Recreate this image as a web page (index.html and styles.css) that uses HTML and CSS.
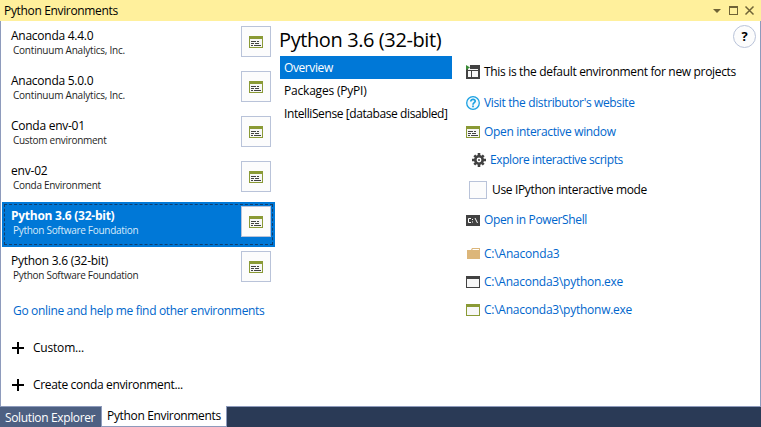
FILE: index.html
```html
<!DOCTYPE html>
<html lang="en">
<head>
<meta charset="utf-8">
<title>Python Environments</title>
<link rel="stylesheet" href="styles.css">
</head>
<body>
<svg width="0" height="0" class="defs">
  <symbol id="interactive" viewBox="0 0 14 12"><path fill="#8a9a35" d="M0 0h14v12H0z"/><path fill="#f7f7f7" d="M1 3h12v8H1z"/><path stroke="#424242" d="M2 5.500h5M8 5.500h2M2 7.500h3M6 7.500h4M2 9.500h2M5 9.500h7"/></symbol>
</svg>
<header class="titlebar"><span class="t-title">Python Environments</span>
  <svg class="winbtns" width="42" height="12" viewBox="0 0 42 12"><path fill="#6f6336" d="M0 4h8L4 8zM16 1h9v9h-9z"/><path fill="#fff09c" d="M17 3h7v6h-7z"/><path stroke="#6f6336" stroke-width="1.500" d="M32.500 1.500l8 8M40.500 1.500l-8 8"/></svg>
</header>
<main class="body">
  <section class="list">
    <div class="env"><div><div class="name n1">Anaconda 4.4.0</div><div class="sub s1">Continuum Analytics, Inc.</div></div><span class="btn"><svg width="14" height="12"><use href="#interactive"/></svg></span></div>
    <div class="env"><div><div class="name n1">Anaconda 5.0.0</div><div class="sub s1">Continuum Analytics, Inc.</div></div><span class="btn"><svg width="14" height="12"><use href="#interactive"/></svg></span></div>
    <div class="env"><div><div class="name n2">Conda env-01</div><div class="sub s2">Custom environment</div></div><span class="btn"><svg width="14" height="12"><use href="#interactive"/></svg></span></div>
    <div class="env"><div><div class="name n3">env-02</div><div class="sub s3">Conda Environment</div></div><span class="btn"><svg width="14" height="12"><use href="#interactive"/></svg></span></div>
    <div class="env selected"><div><div class="name n4">Python 3.6 (32-bit)</div><div class="sub s4">Python Software Foundation</div></div><span class="btn"><svg width="14" height="12"><use href="#interactive"/></svg></span></div>
    <div class="env"><div><div class="name n5">Python 3.6 (32-bit)</div><div class="sub s4">Python Software Foundation</div></div><span class="btn"><svg width="14" height="12"><use href="#interactive"/></svg></span></div>
    <div class="online link"><span class="t-online">Go online and help me find other environments</span></div>
    <div class="add"><svg width="12" height="12"><path stroke="#000" stroke-width="2" d="M0 6h12M6 0v12"/></svg><span class="t-custom">Custom...</span></div>
    <div class="add"><svg width="12" height="12"><path stroke="#000" stroke-width="2" d="M0 6h12M6 0v12"/></svg><span class="t-create">Create conda environment...</span></div>
  </section>
  <section class="pages">
    <h1><span class="t-h">Python 3.6 (32-bit)</span></h1>
    <div class="page on"><span class="t-ov">Overview</span></div>
    <div class="page"><span class="t-pk">Packages (PyPI)</span></div>
    <div class="page"><span class="t-in">IntelliSense [database disabled]</span></div>
  </section>
  <section class="details">
    <div class="row r1"><svg width="14" height="14"><path fill="#424242" d="M0 0h14v14H0z"/><path fill="#f7f7f7" d="M2 4h10v1H2zM2 6h3v6H2zM6 6h6v6H6z"/><path fill="#f7f7f7" d="M0 0h4v4H0z"/><path fill="#388a34" d="M0 0l4 2.500L0 5z"/></svg><span class="t-def">This is the default environment for new projects</span></div>
    <div class="row r2 link"><svg width="14" height="14"><circle cx="7" cy="7" r="6.300" fill="#f3fafe" stroke="#1ba1e2" stroke-width="1.300"/><path fill="none" stroke="#1ba1e2" stroke-width="1.700" d="M4.800 5.500c0-3 4.600-2.600 4.400-.2C9.100 6.700 7 6.700 7 8.700M7 9.600v1.700"/></svg><span class="t-visit">Visit the distributor's website</span></div>
    <div class="row r3 link"><svg width="14" height="12"><use href="#interactive"/></svg><span class="t-open">Open interactive window</span></div>
    <div class="row r4 link"><svg width="14" height="14"><g stroke="#424242" stroke-width="2.600"><path d="M7 0v14M0 7h14M2.300 2.300l9.400 9.400M11.700 2.300l-9.400 9.400"/></g><circle cx="7" cy="7" r="5" fill="#424242"/><circle cx="7" cy="7" r="2.400" fill="#fff"/><circle cx="7" cy="7" r="1" fill="#424242"/></svg><span class="t-exp">Explore interactive scripts</span></div>
    <div class="row r5"><span class="check"></span><span class="t-use">Use IPython interactive mode</span></div>
    <div class="row r6 link"><svg width="14" height="11"><path fill="#424242" d="M0 0h14v11H0z"/><path fill="none" stroke="#fff" d="M5 3.500H2.500v4H5M6.500 4v1M6.500 6.500v1M9 3l2.500 5"/></svg><span class="t-ps">Open in PowerShell</span></div>
    <div class="row r7 link"><svg width="14" height="12"><path fill="#dcb67a" d="M1 2h4l1-2h8v11H1z"/><path fill="#fff" d="M7 1h6v1H6z"/></svg><span class="t-c1">C:\Anaconda3</span></div>
    <div class="row r8 link"><svg width="14" height="12"><path fill="#424242" d="M0 0h14v12H0z"/><path fill="#f7f7f7" d="M1 3h12v8H1z"/></svg><span class="t-c2">C:\Anaconda3\python.exe</span></div>
    <div class="row r9 link"><svg width="14" height="12"><path fill="#8a9a35" d="M0 0h14v12H0z"/><path fill="#f7f7f7" d="M1 3h12v8H1z"/></svg><span class="t-c3">C:\Anaconda3\pythonw.exe</span></div>
  </section>
  <span class="help">?</span>
</main>
<footer class="tabs"><div class="tab"><span class="t-sol">Solution Explorer</span></div><div class="tab active"><span class="t-tab">Python Environments</span></div></footer>
</body>
</html>
```
FILE: styles.css
```css
* { box-sizing: border-box; }
body { margin: 0; width: 761px; height: 427px; overflow: hidden; display: flex; flex-direction: column; font: 12px/20px "Open Sans", sans-serif; color: #000; background: #fff; white-space: nowrap; letter-spacing: -.2px; }
.defs { position: absolute; }
svg { display: block; flex: none; }
.titlebar { height: 21px; background: #fff09c; padding: 0 6px 0 4px; display: flex; justify-content: space-between; align-items: center; }
.body { position: relative; height: 385px; display: flex; border: solid #8e9bbc; border-width: 0 1px; }
.list { width: 274px; padding: 1px 0 0 1px; }
.env { height: 45px; display: flex; justify-content: space-between; padding: 4px 4px 0 9px; }
.name { line-height: 20px; }
.sub { font-size: 10px; line-height: 12px; padding-left: 2px; color: #1e1e1e; margin-top: -2px; }
.btn { width: 30px; height: 31px; border: 1px solid #b9c3d9; background: #fcfcfc; display: flex; align-items: center; justify-content: center; }
.selected { background: #0078d7; color: #fff; outline: 1px dashed #123e6b; outline-offset: -3px; }
.selected .name { font-weight: 700; }
.selected .sub { color: #d7eafa; }
.link { color: #0066cc; }
.online { margin-top: 9px; padding-left: 11px; }
.add { display: flex; align-items: center; gap: 9px; height: 20px; margin-top: 17px; padding-left: 10px; }
.add svg { margin-top: -1px; }
.pages { width: 172px; margin-left: 5px; }
h1 { font-size: 20px; line-height: 35px; height: 35px; font-weight: 400; margin: 0 0 0 -1px; padding-top: 1px; }
.page { height: 23px; line-height: 23px; padding-left: 4px; }
.page.on { background: #0078d7; color: #fff; }
.details { margin-left: 14px; }
.row { display: flex; align-items: center; gap: 4px; height: 20px; }
.r1 { margin-top: 41px; }
.r2 { margin-top: 11px; }
.r3 { margin-top: 9px; }
.r4 { margin-top: 8px; padding-left: 6px; }
.r5 { margin-top: 10px; padding-left: 3px; gap: 5px; }
.r6 { margin-top: 10px; }
.r7 { margin-top: 14px; }
.r8, .r9 { margin-top: 8px; }
.check { width: 18px; height: 18px; border: 1px solid #b9c3d9; background: #fcfcfc; }
.help { position: absolute; right: 4px; top: 4px; width: 23px; height: 23px; border: 1px solid #b9c3d9; border-radius: 50%; background: #fcfcfc; text-align: center; line-height: 21px; font-weight: 700; font-size: 13px; }
.tabs { height: 21px; background: #2a3a56; display: flex; border-top: 1px solid #8e9bbc; }
.tab { width: 101px; background: #4d6082; color: #fff; padding-left: 5px; line-height: 21px; }
.active { width: 126px; background: #fff; color: #000; margin-top: -1px; border: solid #8e9bbc; border-width: 0 1px 1px; line-height: 20px; }

/* Tracking per label */
.n1, .n2, .n4, .n5 { letter-spacing: -.26px; }
.s1 { letter-spacing: -.22px; }
.s2, .s3, .s4 { letter-spacing: -.29px; }
.t-def, .t-open, .t-online { letter-spacing: -.33px; }
.t-visit, .t-ps, .t-sol { letter-spacing: -.36px; }
.t-exp, .t-in { letter-spacing: -.41px; }
.t-use, .t-create, .t-title, .t-tab { letter-spacing: -.34px; }
.t-h, .t-ov { letter-spacing: -.4px; }
.t-c2, .t-c3 { letter-spacing: -.25px; }
```
